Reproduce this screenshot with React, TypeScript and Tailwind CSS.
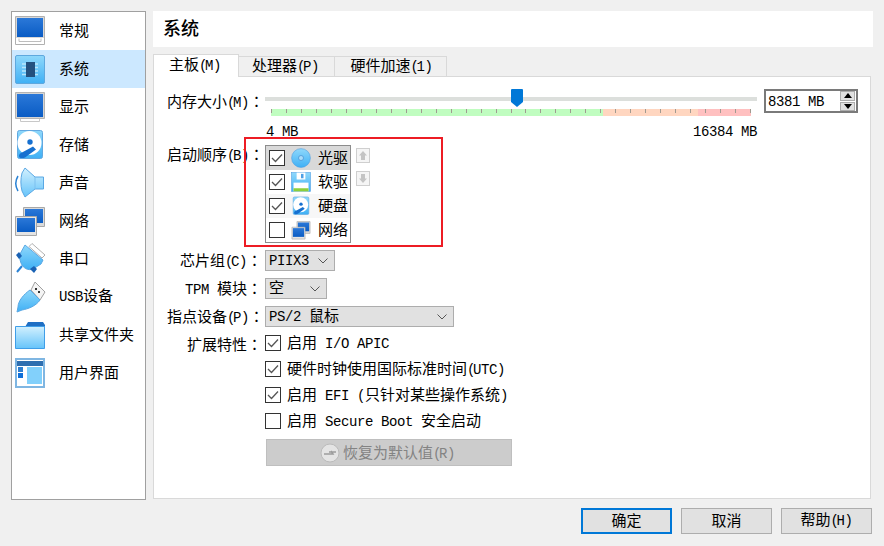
const cjk = "[font-family:'Noto_Sans_CJK_SC',sans-serif]";

// ascii runs are squeezed to the 8px cell of the dialog's font, brackets to 6px
function T({ children }: { children: string }) {
  const parts = children.split(/([()]|[\x00-\x7f]+|：)/).filter(Boolean);
  return (
    <span className="whitespace-pre text-[15px] [font-family:'Noto_Sans_CJK_SC',sans-serif]">
      {parts.map((part, i) =>
        part === "：" ? (
          <span key={i} className="[font-family:'Noto_Sans_CJK_JP',sans-serif]">
            {part}
          </span>
        ) : part === "(" || part === ")" ? (
          <span key={i} className="text-[14px] tracking-[-2.4px] [font-family:'Liberation_Mono',monospace]">
            {part}
          </span>
        ) : /^[\x00-\x7f]+$/.test(part) ? (
          <span key={i} className="text-[14px] tracking-[-0.4px] [font-family:'Liberation_Mono',monospace]">
            {part}
          </span>
        ) : (
          <span key={i}>{part}</span>
        ),
      )}
    </span>
  );
}

function Defs() {
  return (
    <svg className="absolute h-0 w-0" aria-hidden="true">
      <defs>
        <linearGradient id="screen" x1="0" y1="0" x2="0" y2="1">
          <stop offset="0" stopColor="#2b78d8" />
          <stop offset="1" stopColor="#0a5cc4" />
        </linearGradient>
        <linearGradient id="sky" x1="0" y1="0" x2="0" y2="1">
          <stop offset="0" stopColor="#8fd8fb" />
          <stop offset="1" stopColor="#3fb0f5" />
        </linearGradient>
        <linearGradient id="pale" x1="0" y1="0" x2="0" y2="1">
          <stop offset="0" stopColor="#d2f0fe" />
          <stop offset="1" stopColor="#66c4fa" />
        </linearGradient>
      </defs>
    </svg>
  );
}

function Icon({ size = 32, children }: { size?: number; children: React.ReactNode }) {
  return (
    <svg width={size} height={size} viewBox="0 0 32 32" className="shrink-0">
      {children}
    </svg>
  );
}

const GeneralIcon = () => (
  <Icon>
    <path d="M1.500 1.500h29v28h-29z" fill="#fff" stroke="#b0b0b0" />
    <path d="M2 2h28v21H2z" fill="#d8d8d8" />
    <path d="M3 3h26v19H3z" fill="url(#screen)" />
    <path d="M5 23.500v3h22v-3" fill="none" stroke="#bdbdbd" />
  </Icon>
);

const SystemIcon = () => (
  <Icon>
    <rect x="1.500" y="2.500" width="29" height="28" rx="1.500" fill="url(#sky)" stroke="#5fa8de" />
    <path d="M8 11h16M8 14.500h16M8 18h16M8 21.500h16" stroke="#b9e6fb" strokeWidth="1.500" />
    <rect x="12" y="9" width="9" height="15" fill="#24517f" />
  </Icon>
);

const DisplayIcon = () => (
  <Icon>
    <path d="M6.500 25.500h19v5h-19z" fill="#fff" stroke="#c8c8c8" />
    <path d="M1.500 1.500h29v26h-29z" fill="#d4d4d4" stroke="#b4b4b4" />
    <path d="M3 3h26v23H3z" fill="url(#screen)" />
  </Icon>
);

const StorageIcon = ({ size = 32 }: { size?: number }) => (
  <Icon size={size}>
    <rect x="3.500" y="1.500" width="25" height="28" rx="2" fill="url(#sky)" stroke="#62a8e0" />
    <circle cx="15.500" cy="14" r="12" fill="#fff" />
    <circle cx="16" cy="13" r="2.700" fill="#1670d0" />
    <path d="M5 27c0-2 1.500-3 3-3.500L19 17.500l3 3L11 28.500c-2 1-6 1-6-1.500z" fill="#1670d0" />
  </Icon>
);

const AudioIcon = () => (
  <Icon>
    <path d="M8 6L11 1l10 9h8.500v12H21L11 30l-3-6C6.500 18 6.500 12 8 6z" fill="url(#pale)" stroke="#5aa8e4" />
    <path d="M21 10v12" stroke="#7cc0ef" />
    <path d="M4 9C1 14 1 19 4 24" fill="none" stroke="#2a82d4" strokeWidth="1.500" />
  </Icon>
);

const NetworkIcon = ({ size = 32 }: { size?: number }) => (
  <Icon size={size}>
    <path d="M9.500 2.500h21v19h-21z" fill="#dadada" stroke="#a8a8a8" />
    <path d="M11 4h18v14H11z" fill="url(#screen)" />
    <path d="M1.500 11.500h21v19h-21z" fill="#e4e4e4" stroke="#a8a8a8" />
    <path d="M3 13h18v14H3z" fill="url(#screen)" />
  </Icon>
);

const SerialIcon = () => (
  <Icon>
    <path d="M18 0.500L31 12l-3 3L15 3.500z" fill="#fff" stroke="#b0b0b0" />
    <path d="M11 2l18 15-2 4-8 5c-5 2-10-1-12-6-1-3-2-6-1-9z" fill="url(#sky)" stroke="#5aa8e4" />
    <path d="M2 12l3-3 3 4-3 3zM16 26l4-3 3 3-3 4z" fill="#1a62b4" />
    <path d="M8 23l-5 6" stroke="#2a82d4" strokeWidth="2" />
  </Icon>
);

const UsbIcon = () => (
  <Icon>
    <path d="M21 1l10 10-5 8-9-10z" fill="#f4f4f4" stroke="#a0a0a0" />
    <rect x="21" y="7" width="2" height="2" fill="#333" />
    <rect x="24" y="10" width="2" height="2" fill="#333" />
    <path d="M16 9l10 10c-4 6-12 9-18 10l-5 2 1-5C4 20 10 13 16 9z" fill="url(#sky)" stroke="#5aa8e4" />
  </Icon>
);

const FolderIcon = () => (
  <Icon>
    <path d="M11 8l3-5h15l2 3v2z" fill="#1f6fc4" />
    <path d="M1.500 7.500h29v22h-29z" fill="url(#pale)" stroke="#3f9ee8" />
  </Icon>
);

const UiIcon = () => (
  <Icon>
    <rect x="1" y="1" width="30" height="30" fill="#7fb6e2" />
    <rect x="3" y="3" width="26" height="26" fill="#fff" />
    <rect x="3" y="4" width="26" height="5" fill="#2f6fb0" />
    <rect x="4" y="10" width="5" height="5" fill="#2f7fd0" />
    <rect x="4" y="16" width="5" height="5" fill="#0f6fd8" />
    <rect x="13" y="10" width="15" height="17" fill="#82d0fb" />
  </Icon>
);

const DiscIcon = () => (
  <Icon size={20}>
    <circle cx="16" cy="16" r="15" fill="url(#sky)" stroke="#4ea0e4" />
    <circle cx="16" cy="16" r="4" fill="#a8dcfa" stroke="#3b86cc" />
  </Icon>
);

const FloppyIcon = () => (
  <Icon size={20}>
    <rect x="1" y="1" width="30" height="30" fill="url(#sky)" stroke="#4ea0e4" />
    <rect x="9" y="1" width="14" height="11" fill="#fff" />
    <rect x="16" y="3" width="4" height="7" fill="#4ea0e4" />
    <rect x="4" y="17" width="24" height="14" fill="#fff" />
    <rect x="4" y="26" width="24" height="5" fill="#8ccf3c" />
  </Icon>
);

const sections = [
  { label: "常规", icon: <GeneralIcon /> },
  { label: "系统", icon: <SystemIcon />, active: true },
  { label: "显示", icon: <DisplayIcon /> },
  { label: "存储", icon: <StorageIcon /> },
  { label: "声音", icon: <AudioIcon /> },
  { label: "网络", icon: <NetworkIcon /> },
  { label: "串口", icon: <SerialIcon /> },
  { label: "USB设备", icon: <UsbIcon /> },
  { label: "共享文件夹", icon: <FolderIcon /> },
  { label: "用户界面", icon: <UiIcon /> },
];

const bootItems = [
  { label: "光驱", icon: <DiscIcon />, checked: true, bg: "bg-[#d9d9d9]" },
  { label: "软驱", icon: <FloppyIcon />, checked: true, bg: "bg-white" },
  { label: "硬盘", icon: <StorageIcon size={20} />, checked: true, bg: "bg-[#f7f7f7]" },
  { label: "网络", icon: <NetworkIcon size={20} />, checked: false, bg: "bg-white" },
];

const ticks = Array.from({ length: 33 }, (_, i) => i);

function Checkbox({ checked }: { checked: boolean }) {
  return (
    <span className="flex h-4 w-4 shrink-0 items-center justify-center border border-[#333] bg-white">
      {checked && (
        <svg width="12" height="10" viewBox="0 0 12 10">
          <path d="M1 5l3.500 3.500L11 1.500" fill="none" stroke="#555" strokeWidth="1.300" />
        </svg>
      )}
    </span>
  );
}

function Combo({ label, width }: { label: string; width: string }) {
  return (
    <div className={`flex h-[21px] items-center justify-between border border-[#adadad] bg-[#e1e1e1] pb-[2px] pl-[3px] pr-[6px] ${width}`}>
      <T>{label}</T>
      <svg width="10" height="6" viewBox="0 0 10 6" className="mt-[2px]">
        <path d="M0.500 0.500L5 5l4.500-4.500" fill="none" stroke="#555" />
      </svg>
    </div>
  );
}

function FormRow({ label, children, className = "" }: { label: string; children: React.ReactNode; className?: string }) {
  return (
    <div className={`flex items-center ${className}`}>
      <div className="w-[95px] shrink-0 pb-[2px] text-right leading-none">
        <T>{label}</T>
      </div>
      <div className="ml-[3px]">{children}</div>
    </div>
  );
}

function CheckRow({ label, checked }: { label: string; checked: boolean }) {
  return (
    <div className="flex h-[26px] items-center gap-[6px]">
      <Checkbox checked={checked} />
      <T>{label}</T>
    </div>
  );
}

function ArrowButton({ up }: { up: boolean }) {
  return (
    <div className="flex h-[15px] w-[14px] items-center justify-center border border-[#cfcfcf] bg-[#f5f5f5]">
      <svg width="8" height="9" viewBox="0 0 8 9">
        <path d={up ? "M4 0l4 4.500H6V9H2V4.500H0z" : "M4 9L0 4.500h2V0h4v4.500h2z"} fill="#c4c4c4" />
      </svg>
    </div>
  );
}

function DialogButton({ label, primary }: { label: string; primary?: boolean }) {
  return (
    <div
      className={`flex h-[26px] w-[91px] items-center justify-center bg-[#e1e1e1] pb-[2px] ${
        primary ? "border-2 border-[#0078d7]" : "border border-[#adadad]"
      }`}
    >
      <T>{label}</T>
    </div>
  );
}

export default function App() {
  return (
    <div className={`relative h-[546px] w-[884px] overflow-hidden bg-[#f0f0f0] pt-[11px] text-black ${cjk}`}>
      <Defs />
      <div className="flex h-[489px] pl-[11px]">
        <aside className="flex h-[489px] w-[135px] shrink-0 flex-col border border-[#a0a0a0] bg-white">
          {sections.map((s) => (
            <div key={s.label} className={`flex h-[38px] shrink-0 items-center pl-[2px] ${s.active ? "bg-[#cce8ff]" : ""}`}>
              {s.icon}
              <span className="ml-[13px] pb-[4px] leading-none">
                <T>{s.label}</T>
              </span>
            </div>
          ))}
        </aside>

        <div className="ml-[7px] flex w-[720px] flex-col">
          <div className="flex h-[36px] shrink-0 items-center bg-white pb-[4px] pl-[10px] text-[18px] font-medium leading-none">
            系统
          </div>
          <div className="relative z-10 mt-[7px] flex h-[23px] shrink-0 items-end">
            <div className="flex h-[23px] w-[86px] items-center justify-center border border-b-0 border-[#d9d9d9] bg-white pb-[3px] pr-[2px]">
              <T>主板(M)</T>
            </div>
            <div className="flex h-[21px] w-[96px] items-center justify-center border border-l-0 border-[#d9d9d9] bg-[#f0f0f0] pb-[2px] pr-[2px]">
              <T>处理器(P)</T>
            </div>
            <div className="flex h-[21px] w-[112px] items-center justify-center border border-l-0 border-[#d9d9d9] bg-[#f0f0f0] pb-[2px] pl-[2px]">
              <T>硬件加速(1)</T>
            </div>
          </div>

          <section className="-mt-px flex h-[423px] w-[718px] flex-col border border-[#d9d9d9] bg-white pl-[13px] pt-[12px]">
            <div className="flex items-start">
              <div className="flex h-[24px] w-[95px] shrink-0 items-center leading-none">
                <T>内存大小(M)：</T>
              </div>
              <div className="relative ml-[3px] h-[50px] w-[492px]">
                <div className="mt-[8px] h-[4px] bg-[#dcdfdc]" />
                <svg width="12" height="18" viewBox="0 0 12 18" className="absolute left-[246px] top-0">
                  <path d="M0 1a1 1 0 0 1 1-1h10a1 1 0 0 1 1 1v12l-6 5-6-5z" fill="#0078d7" />
                </svg>
                <div className="ml-[6px] mt-[8px] flex h-[7px] w-[480px] justify-between bg-[linear-gradient(to_right,#c0fdc0_0,#c0fdc0_332px,#ffd6c0_332px,#ffd6c0_427px,#ffc0c0_427px,#ffc0c0_100%)]">
                  {ticks.map((t) => (
                    <span key={t} className="h-[4px] w-px bg-[#a09a90]" />
                  ))}
                </div>
                <div className="mt-[6px] flex justify-between pl-px leading-none">
                  <T>4 MB</T>
                  <T>16384 MB</T>
                </div>
              </div>
              <div className="ml-[7px] flex h-[24px] w-[94px] items-center justify-between border-2 border-[#7a7a7a] pl-[2px] pr-px">
                <T>8381 MB</T>
                <div className="flex h-[20px] w-[15px] flex-col gap-px">
                  <div className="flex flex-1 items-center justify-center border border-[#adadad] bg-[#e1e1e1]">
                    <svg width="8" height="5" viewBox="0 0 8 5"><path d="M4 0l4 5H0z" fill="#000" /></svg>
                  </div>
                  <div className="flex flex-1 items-center justify-center border border-[#adadad] bg-[#e1e1e1]">
                    <svg width="8" height="5" viewBox="0 0 8 5"><path d="M4 5L0 0h8z" fill="#000" /></svg>
                  </div>
                </div>
              </div>
            </div>

            <div className="mt-[6px] flex items-start">
              <div className="flex h-[18px] w-[95px] shrink-0 items-center leading-none">
                <T>启动顺序(B)：</T>
              </div>
              <div className="ml-[3px] h-[98px] w-[86px] border border-[#8c8c8c]">
                {bootItems.map((b) => (
                  <div key={b.label} className={`flex h-[24px] items-center pl-[3px] ${b.bg}`}>
                    <Checkbox checked={b.checked} />
                    <span className="ml-[6px] flex">{b.icon}</span>
                    <span className="ml-[7px] pb-[4px] leading-none">
                      <T>{b.label}</T>
                    </span>
                  </div>
                ))}
              </div>
              <div className="ml-[5px] mt-[3px] flex flex-col gap-[8px]">
                <ArrowButton up />
                <ArrowButton up={false} />
              </div>
            </div>

            <FormRow label="芯片组(C)：" className="mt-[7px]">
              <Combo label="PIIX3" width="w-[70px]" />
            </FormRow>
            <FormRow label="TPM 模块：" className="mt-[7px]">
              <Combo label="空" width="w-[62px]" />
            </FormRow>
            <FormRow label="指点设备(P)：" className="mt-[7px]">
              <Combo label="PS/2 鼠标" width="w-[189px]" />
            </FormRow>

            <div className="mt-[3px] flex items-start">
              <div className="flex h-[26px] w-[95px] shrink-0 items-center justify-end leading-none">
                <T>扩展特性：</T>
              </div>
              <div className="ml-[3px] flex flex-col">
                <CheckRow label="启用 I/O APIC" checked />
                <CheckRow label="硬件时钟使用国际标准时间(UTC)" checked />
                <CheckRow label="启用 EFI (只针对某些操作系统)" checked />
                <CheckRow label="启用 Secure Boot 安全启动" checked={false} />
                <div className="ml-px mt-[5px] flex h-[27px] w-[246px] items-center border border-[#bfbfbf] bg-[#cccccc] pl-[53px] text-[#838383]">
                  <svg width="20" height="20" viewBox="0 0 20 20" className="shrink-0">
                    <circle cx="10" cy="10" r="9" fill="#e4e4e4" stroke="#bbb" />
                    <path d="M4 11h9l-2-3M16 9H9" fill="none" stroke="#9c9c9c" strokeWidth="1.500" />
                  </svg>
                  <span className="ml-[3px] pb-[2px] leading-none">
                    <T>恢复为默认值(R)</T>
                  </span>
                </div>
              </div>
            </div>
          </section>
        </div>
      </div>

      <div className="mt-[8px] flex justify-end gap-[9px] pr-[12px]">
        <DialogButton label="确定" primary />
        <DialogButton label="取消" />
        <DialogButton label="帮助(H)" />
      </div>

      {/* annotation drawn over the screenshot */}
      <div className="absolute left-[244px] top-[137px] h-[110px] w-[199px] border-2 border-[#ed1c24]" />
    </div>
  );
}
